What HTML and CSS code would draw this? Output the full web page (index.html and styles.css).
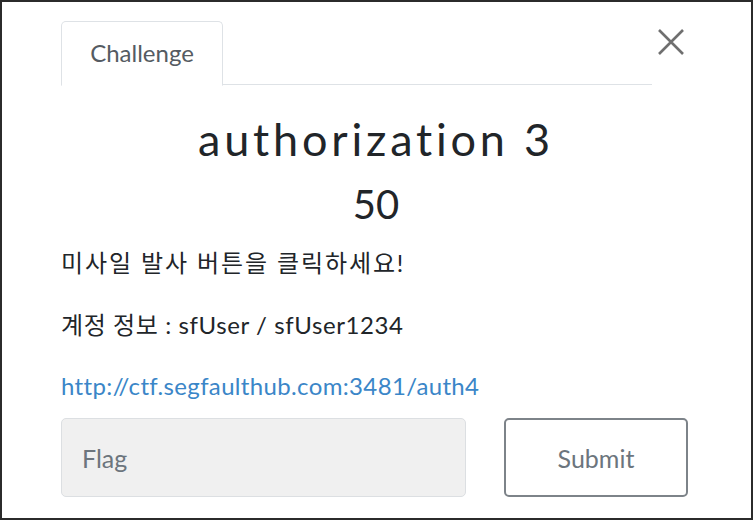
FILE: index.html
```html
<!DOCTYPE html>
<html lang="ko">
<head>
  <meta charset="UTF-8">
  <meta name="viewport" content="width=device-width, initial-scale=1.0">
  <title>authorization 3</title>
  <link rel="stylesheet" href="styles.css">
</head>
<body>

  <div class="modal">

    <div class="modal-top">
      <ul class="nav-tabs">
        <li class="tab active">Challenge</li>
      </ul>
      <button class="close" aria-label="Close">
        <svg width="26" height="26" viewBox="0 0 26 26">
          <path d="M1 1 L25 25 M25 1 L1 25" stroke="#6f6f6f" stroke-width="2.6" fill="none"/>
        </svg>
      </button>
    </div>

    <h1 class="chal-name">authorization 3</h1>
    <h2 class="chal-value">50</h2>

    <p class="desc first ko">미사일 발사 버튼을 클릭하세요!</p>
    <p class="desc ko-mixed">계정 정보 : sfUser / sfUser1234</p>
    <p class="desc link-line"><a href="#">http://ctf.segfaulthub.com:3481/auth4</a></p>

    <form class="submit-row">
      <input class="flag-input" type="text" placeholder="Flag">
      <button class="submit-btn" type="button">Submit</button>
    </form>

  </div>

</body>
</html>
```

FILE: styles.css
```css
* {
  box-sizing: border-box;
  margin: 0;
  padding: 0;
}

body {
  background: #fff;
  font-family: Lato, "Noto Sans CJK KR", sans-serif;
  color: #212529;
}

.modal {
  width: 753px;
  height: 520px;
  border: 2px solid #2b2b2b;
  padding: 19px 0 0 59px;
}

.modal-top {
  display: flex;
  align-items: flex-start;
  width: 630px;
}

.nav-tabs {
  list-style: none;
  display: flex;
  width: 591px;
  height: 64px;
  border-bottom: 1px solid #dee2e6;
}

.tab {
  width: 162px;
  height: 65px;
  border: 1px solid #dee2e6;
  border-bottom-color: #fff;
  border-radius: 5px 5px 0 0;
  background: #fff;
  color: #555b62;
  font-size: 24px;
  display: flex;
  align-items: center;
  justify-content: center;
  padding-bottom: 2px;
}

.close {
  background: none;
  border: none;
  margin: 8px 0 0 6px;
  width: 26px;
  height: 26px;
  cursor: pointer;
}

.close svg {
  display: block;
}

.chal-name {
  width: 630px;
  margin-top: 26px;
  text-align: center;
  font-weight: 400;
  font-size: 45px;
  letter-spacing: 3.8px;
  line-height: 56px;
}

.chal-value {
  width: 630px;
  margin-top: 13px;
  text-align: center;
  font-weight: 400;
  font-size: 40px;
  line-height: 48px;
}

.desc {
  font-size: 24px;
  line-height: 30px;
  margin-top: 32px;
  letter-spacing: 0.35px;
}

.desc.first {
  margin-top: 20px;
}

.ko {
  letter-spacing: 1.9px;
}

.ko-mixed {
  letter-spacing: 0.6px;
}

.link-line {
  margin-top: 31px;
}

.link-line a {
  color: #3a86c8;
  text-decoration: none;
}

.submit-row {
  display: flex;
  gap: 38px;
  margin-top: 17px;
  width: 628px;
}

.flag-input {
  width: 405px;
  height: 79px;
  background: #f0f0f0;
  border: 1px solid #dcdfe2;
  border-radius: 5px;
  padding: 0 20px;
  font-family: Lato, sans-serif;
  font-size: 25px;
  color: #495057;
}

.flag-input::placeholder {
  color: #6c757d;
}

.submit-btn {
  width: 184px;
  height: 79px;
  background: #fff;
  border: 2px solid #7d8389;
  border-radius: 5px;
  font-family: Lato, sans-serif;
  font-size: 25px;
  color: #6c757d;
}
```
